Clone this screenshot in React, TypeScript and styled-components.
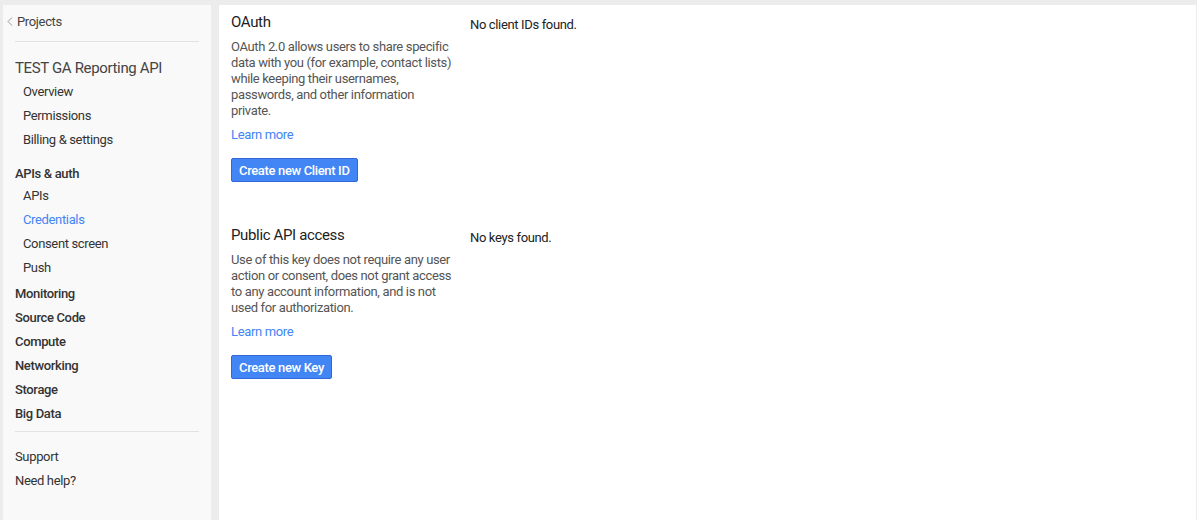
import { createGlobalStyle } from "styled-components";
import styled from "styled-components";

const GlobalStyle = createGlobalStyle`
  html, body {
    margin: 0;
    padding: 0;
    background: #ececec;
    font-family: Roboto, "Liberation Sans", Arial, sans-serif;
    font-size: 13px;
    letter-spacing: -0.027em;
    color: #333;
  }
`;

const Page = styled.div`
  display: flex;
  gap: 8px;
  padding: 5px 1px 0 3px;
  min-height: 100vh;
  box-sizing: border-box;
`;

const Sidebar = styled.nav`
  width: 208px;
  flex: none;
  background: #f9f9f9;
  padding: 4px 12px 0 12px;
  box-sizing: border-box;
`;

const BackLink = styled.a`
  display: flex;
  align-items: center;
  gap: 4px;
  height: 24px;
  margin-left: -8px;
  color: #444;
  font-size: 13px;
  cursor: pointer;
`;

const Divider = styled.hr<{ $top: number; $bottom: number }>`
  border: none;
  border-top: 1px solid #e2e2e2;
  margin: ${(p) => `${p.$top}px 0 ${p.$bottom}px 0`};
`;

const ProjectName = styled.div`
  font-size: 15px;
  line-height: 24px;
  color: #444;
`;

const NavItem = styled.a<{ $active?: boolean; $bold?: boolean; $indent?: boolean }>`
  display: block;
  line-height: 24px;
  padding-left: ${(p) => (p.$indent ? 8 : 0)}px;
  font-weight: ${(p) => (p.$bold ? 500 : 400)};
  color: ${(p) => (p.$active ? "#4285f4" : "#333")};
  cursor: pointer;
`;

const GroupHeader = styled.div`
  line-height: 21px;
  margin-top: 11px;
  font-weight: 500;
  color: #333;
`;

const Spacer = styled.div<{ $h: number }>`
  height: ${(p) => p.$h}px;
`;

const Main = styled.main`
  flex: 1;
  background: #fff;
  padding: 7px 12px 0 12px;
`;

const Section = styled.section`
  display: flex;
  gap: 14px;
  margin-bottom: 43px;
`;

const Info = styled.div`
  width: 225px;
  flex: none;
`;

const Title = styled.h2`
  margin: 0;
  font-size: 15px;
  font-weight: 400;
  line-height: 20px;
  color: #222;
`;

const Desc = styled.p`
  margin: 7px 0 0 0;
  line-height: 16px;
  color: #555;
`;

const LearnMore = styled.a`
  display: block;
  margin-top: 8px;
  line-height: 16px;
  color: #4285f4;
  cursor: pointer;
`;

const Button = styled.button`
  margin-top: 15px;
  height: 24px;
  padding: 0 7px;
  background: #4285f4;
  border: 1px solid #3367d6;
  border-radius: 2px;
  color: #fff;
  font-family: inherit;
  font-size: 13px;
  letter-spacing: inherit;
  font-weight: 500;
  cursor: pointer;
`;

const Empty = styled.div`
  margin-top: 3px;
  line-height: 20px;
  color: #222;
`;

const Chevron = () => (
  <svg width="6" height="9" viewBox="0 0 6 9">
    <polyline points="5,0.5 1,4.5 5,8.5" fill="none" stroke="#999" strokeWidth="1" />
  </svg>
);

const services = ["Monitoring", "Source Code", "Compute", "Networking", "Storage", "Big Data"];

export default function App() {
  return (
    <>
      <GlobalStyle />
      <Page>
        <Sidebar>
          <BackLink>
            <Chevron />
            Projects
          </BackLink>
          <Divider $top={8} $bottom={14} />
          <ProjectName>TEST GA Reporting API</ProjectName>
          <NavItem $indent>Overview</NavItem>
          <NavItem $indent>Permissions</NavItem>
          <NavItem $indent>Billing &amp; settings</NavItem>
          <GroupHeader>APIs &amp; auth</GroupHeader>
          <NavItem $indent>APIs</NavItem>
          <NavItem $indent $active>
            Credentials
          </NavItem>
          <NavItem $indent>Consent screen</NavItem>
          <NavItem $indent>Push</NavItem>
          <Spacer $h={2} />
          {services.map((s) => (
            <NavItem key={s} $bold>
              {s}
            </NavItem>
          ))}
          <Divider $top={5} $bottom={13} />
          <NavItem>Support</NavItem>
          <NavItem>Need help?</NavItem>
        </Sidebar>
        <Main>
          <Section>
            <Info>
              <Title>OAuth</Title>
              <Desc>
                OAuth 2.0 allows users to share specific data with you (for example, contact lists)
                while keeping their usernames, passwords, and other information private.
              </Desc>
              <LearnMore>Learn more</LearnMore>
              <Button>Create new Client ID</Button>
            </Info>
            <Empty>No client IDs found.</Empty>
          </Section>
          <Section>
            <Info>
              <Title>Public API access</Title>
              <Desc>
                Use of this key does not require any user action or consent, does not grant access
                to any account information, and is not used for authorization.
              </Desc>
              <LearnMore>Learn more</LearnMore>
              <Button>Create new Key</Button>
            </Info>
            <Empty>No keys found.</Empty>
          </Section>
        </Main>
      </Page>
    </>
  );
}
